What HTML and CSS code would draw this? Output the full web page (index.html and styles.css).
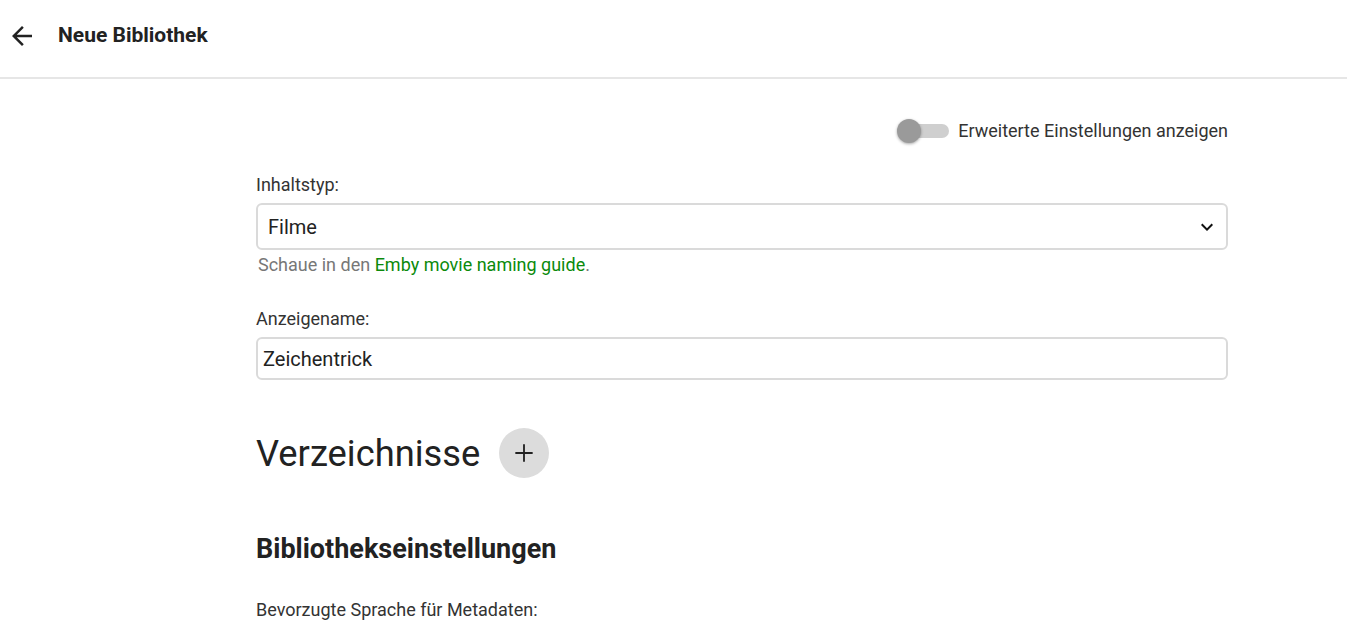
FILE: index.html
```html
<!DOCTYPE html>
<html lang="de">
<head>
<meta charset="utf-8">
<title>Neue Bibliothek</title>
<link rel="stylesheet" href="styles.css">
</head>
<body>
<header class="topbar">
  <button class="back" aria-label="Zurück">
    <svg viewBox="0 0 24 24" width="30" height="30"><path d="M20 11H7.83l5.59-5.59L12 4l-8 8 8 8 1.41-1.41L7.83 13H20v-2z" fill="#222"/></svg>
  </button>
  <h1 class="title">Neue Bibliothek</h1>
</header>
<main class="content">
  <div class="toggle-row">
    <span class="switch"><span class="track"></span><span class="thumb"></span></span>
    <span class="toggle-label">Erweiterte Einstellungen anzeigen</span>
  </div>

  <div class="field field-first">
    <div class="label">Inhaltstyp:</div>
    <div class="select">
      <span class="select-value">Filme</span>
      <svg class="chev" viewBox="0 0 24 24" width="24" height="24"><path d="M7.41 8.59L12 13.17l4.59-4.58L18 10l-6 6-6-6 1.41-1.41z" fill="#111"/></svg>
    </div>
    <div class="help">Schaue in den <a class="link" href="#">Emby movie naming guide</a>.</div>
  </div>

  <div class="field field-second">
    <div class="label">Anzeigename:</div>
    <div class="input">Zeichentrick</div>
  </div>

  <div class="dirs">
    <h2 class="dirs-title">Verzeichnisse</h2>
    <button class="add" aria-label="Hinzufügen">
      <svg viewBox="0 0 24 24" width="26" height="26"><path d="M12 4v16M4 12h16" stroke="#222" stroke-width="1.7" fill="none"/></svg>
    </button>
  </div>

  <h2 class="section-title">Bibliothekseinstellungen</h2>
  <div class="label label-lang">Bevorzugte Sprache für Metadaten:</div>
</main>
</body>
</html>
```
FILE: styles.css
```css
html, body {
  margin: 0;
  padding: 0;
  background: #fff;
  font-family: Roboto, "Noto Sans", Arial, sans-serif;
  color: #222;
  overflow: hidden;
}
*, *::before, *::after {
  box-sizing: border-box;
}
.topbar {
  height: 79px;
  border-bottom: 2px solid #e6e6e6;
  display: flex;
  align-items: center;
}
.back {
  border: 0;
  background: none;
  padding: 0;
  margin: 0 0 0 7px;
  width: 30px;
  height: 30px;
  display: flex;
  align-items: center;
  justify-content: center;
  cursor: pointer;
  position: relative;
  top: -3px;
}
.title {
  margin: 0 0 0 21px;
  font-size: 21px;
  font-weight: 700;
  color: #222;
  position: relative;
  top: -4px;
}
.content {
  margin-left: 256px;
  width: 972px;
}
.toggle-row {
  display: flex;
  justify-content: flex-end;
  align-items: center;
  margin-top: 40px;
  height: 24px;
}
.switch {
  position: relative;
  width: 52px;
  height: 24px;
  margin-right: 9px;
  display: inline-block;
}
.track {
  position: absolute;
  left: 2px;
  right: 0;
  top: 5px;
  height: 14px;
  border-radius: 7px;
  background: #cfcfcf;
}
.thumb {
  position: absolute;
  left: 0;
  top: 0;
  width: 24px;
  height: 24px;
  border-radius: 50%;
  background: #9a9a9a;
  box-shadow: 0 1px 3px rgba(0,0,0,0.35);
}
.toggle-label {
  font-size: 18px;
  color: #333;
  line-height: 24px;
}
.field-first {
  margin-top: 31px;
}
.label {
  font-size: 18px;
  line-height: 22px;
  color: #333;
}
.select {
  margin-top: 7px;
  height: 47px;
  border: 2px solid #dadada;
  border-radius: 6px;
  display: flex;
  align-items: center;
  justify-content: space-between;
  padding: 0 10px 0 10px;
}
.select-value {
  font-size: 20px;
  color: #222;
}
.chev {
  margin-right: -3px;
}
.help {
  margin-top: 4px;
  font-size: 18px;
  line-height: 22px;
  color: #777;
  padding-left: 2px;
}
.link {
  color: #0b8a0b;
  text-decoration: none;
}
.field-second {
  margin-top: 32px;
}
.input {
  margin-top: 7px;
  height: 43px;
  border: 2px solid #dadada;
  border-radius: 6px;
  display: flex;
  align-items: center;
  padding: 0 5px;
  font-size: 20px;
  color: #222;
}
.dirs {
  display: flex;
  align-items: center;
  margin-top: 48px;
  height: 50px;
}
.dirs-title {
  margin: 0;
  font-size: 36.3px;
  font-weight: 400;
  color: #222;
}
.add {
  margin-left: 19px;
  width: 50px;
  height: 50px;
  border-radius: 50%;
  border: 0;
  background: #dcdcdc;
  display: flex;
  align-items: center;
  justify-content: center;
  padding: 0;
}
.section-title {
  margin: 55px 0 0 0;
  font-size: 27px;
  font-weight: 700;
  line-height: 32px;
  color: #222;
}
.label-lang {
  margin-top: 34px;
}
```
